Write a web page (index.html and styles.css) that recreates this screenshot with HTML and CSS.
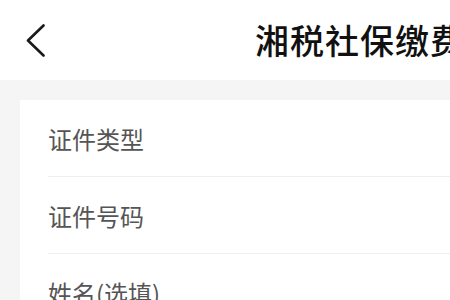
FILE: index.html
```html
<!DOCTYPE html>
<html lang="zh-CN">
<head>
<meta charset="utf-8">
<title>湘税社保缴费</title>
<link rel="stylesheet" href="styles.css">
</head>
<body>
<div class="page">
  <header class="topbar">
    <svg class="back" width="20" height="34" viewBox="0 0 20 34">
      <polyline points="17.5,1.5 2,16.5 17.5,31.5" fill="none" stroke="#1a1a1a" stroke-width="2.6" stroke-linecap="round" stroke-linejoin="round"/>
    </svg>
    <h1 class="title">湘税社保缴费</h1>
  </header>
  <main class="content">
    <section class="card">
      <div class="row"><span class="label">证件类型</span></div>
      <div class="row"><span class="label">证件号码</span></div>
      <div class="row"><span class="label">姓名(选填)</span></div>
    </section>
  </main>
</div>
</body>
</html>
```
FILE: styles.css
```css
html, body {
  margin: 0;
  padding: 0;
  background: #f5f5f5;
}
body {
  font-family: "Noto Sans CJK SC", "Noto Sans", sans-serif;
  width: 450px;
  height: 300px;
  overflow: hidden;
}
.page {
  width: 450px;
  height: 300px;
  overflow: hidden;
}
.topbar {
  height: 80px;
  background: #ffffff;
  display: flex;
  align-items: center;
  padding-left: 26px;
  box-sizing: border-box;
  white-space: nowrap;
  overflow: hidden;
}
.back {
  flex: none;
  margin-top: 1px;
}
.title {
  margin: 0 0 0 209px;
  font-size: 34px;
  font-weight: 500;
  color: #111111;
  letter-spacing: 1px;
  line-height: 1;
  flex: none;
}
.content {
  padding: 20px 0 0 20px;
}
.card {
  background: #ffffff;
  padding-left: 28px;
}
.row {
  height: 75px;
  display: flex;
  align-items: center;
  border-bottom: 1px solid #efefef;
  padding-top: 1px;
  box-sizing: content-box;
}
.label {
  font-size: 24px;
  color: #555555;
  line-height: 1;
}
```
